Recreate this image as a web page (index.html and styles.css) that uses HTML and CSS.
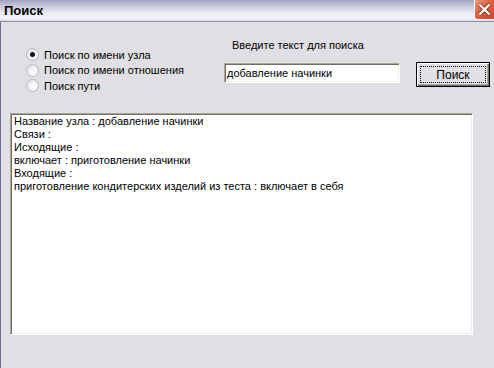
FILE: index.html
```html
<!DOCTYPE html>
<html lang="ru">
<head>
    <meta charset="UTF-8">
    <title>Поиск</title>
    <link rel="stylesheet" href="styles.css">
</head>
<body>

<div class="window">
    <div class="titlebar">
        <span class="title">Поиск</span>
        <div class="close" title="Закрыть">
            <svg class="close-x" width="13" height="13" viewBox="0 0 13 13">
                <path d="M1.5 1.5 L11.5 11.5 M11.5 1.5 L1.5 11.5" stroke="#9a3520" stroke-width="4" fill="none"/>
                <path d="M1.5 1.5 L11.5 11.5 M11.5 1.5 L1.5 11.5" stroke="#fff" stroke-width="2.2" fill="none"/>
            </svg>
        </div>
    </div>

    <div class="content">
        <div class="top">
            <!-- Search mode -->
            <div class="radios">
                <label class="radio"><span class="dot checked"></span>Поиск по имени узла</label>
                <label class="radio"><span class="dot"></span>Поиск по имени отношения</label>
                <label class="radio"><span class="dot"></span>Поиск пути</label>
            </div>

            <!-- Search text -->
            <div class="search">
                <div class="search-label">Введите текст для поиска</div>
                <div class="search-row">
                    <div class="field">добавление начинки</div>
                    <button class="btn"><span class="focus">Поиск</span></button>
                </div>
            </div>
        </div>

        <!-- Result -->
        <div class="output">
            <div>Название узла : добавление начинки</div>
            <div>Связи :</div>
            <div>Исходящие :</div>
            <div>включает : приготовление начинки</div>
            <div>Входящие :</div>
            <div>приготовление кондитерских изделий из теста : включает в себя</div>
        </div>
    </div>
</div>

</body>
</html>
```

FILE: styles.css
```css
html, body {
    overflow: hidden;
}
body {
    margin: 0;
    padding: 0;
    font-family: "Liberation Sans", Arial, sans-serif;
    font-size: 11px;
    color: #000;
    background-color: #e0dfe3;
}
.window {
    width: 494px;
    height: 368px;
    display: flex;
    flex-direction: column;
    overflow: hidden;
}
.titlebar {
    height: 21px;
    flex-shrink: 0;
    display: flex;
    align-items: flex-start;
    background: linear-gradient(#a2a1c2 0%, #c4c3d8 25%, #eeeef4 65%, #f4f4f8 85%, #dcdce6 100%);
    border-bottom: 1px solid #8c8ba8;
}
.title {
    flex: 1;
    font-weight: bold;
    font-size: 13px;
    line-height: 21px;
    padding-left: 4px;
}
.close {
    box-sizing: border-box;
    width: 20px;
    min-width: 20px;
    height: 20px;
    border-left: 1px solid #fff;
    border-bottom: 1px solid #fff;
    border-radius: 0 0 0 3px;
    background-color: #d65a3e;
    background-image: linear-gradient(135deg, #ec9a82 0%, #dc6446 40%, #c8472c 100%);
    display: flex;
    align-items: center;
    justify-content: center;
}
.close-x {
    display: block;
}
.content {
    flex: 1;
    border-left: 1px solid #6e6d92;
    display: flex;
    flex-direction: column;
}
.top {
    height: 91px;
    display: flex;
}
.radios {
    margin-left: 25px;
    padding-top: 25px;
    width: 198px;
}
.radio {
    display: flex;
    align-items: center;
    height: 15.6px;
}
.dot {
    width: 11px;
    height: 11px;
    border: 1px solid #b9b8c4;
    border-radius: 50%;
    background: radial-gradient(circle at 65% 65%, #ffffff 0%, #f2f2f2 45%, #d8d7de 100%);
    margin-right: 5px;
    position: relative;
}
.dot.checked::after {
    content: "";
    position: absolute;
    left: 3px;
    top: 3px;
    width: 5px;
    height: 5px;
    border-radius: 50%;
    background-color: #111;
}
.search {
    padding-top: 17px;
}
.search-label {
    margin-left: 8px;
    line-height: 13px;
    margin-bottom: 11px;
}
.search-row {
    display: flex;
    align-items: flex-start;
}
.field {
    width: 172px;
    height: 16px;
    line-height: 16px;
    background-color: #fff;
    border: 1px solid;
    border-color: #aca899 #fff #fff #aca899;
    box-shadow: inset 1px 1px 0 #716f64, inset -1px -1px 0 #f1efe2;
    padding: 1px 0 1px 2px;
}
.btn {
    width: 74px;
    height: 25px;
    margin: -1px 0 0 16px;
    padding: 2px;
    border: 1px solid #000;
    background-color: #e0dfe3;
    box-shadow: inset 1px 1px 0 #fff, inset -1px -1px 0 #716f64, inset -2px -2px 0 #aca899;
    font-family: "Liberation Sans", Arial, sans-serif;
    font-size: 12px;
    display: flex;
}
.focus {
    flex: 1;
    border: 1px dotted #000;
    display: flex;
    align-items: center;
    justify-content: center;
    margin: 1px;
}
.output {
    margin-left: 9px;
    width: 460px;
    height: 219px;
    padding: 1px 0 0 1px;
    background-color: #fff;
    border: 1px solid;
    border-color: #aca899 #fff #fff #aca899;
    box-shadow: inset 1px 1px 0 #716f64, inset -1px -1px 0 #f1efe2;
    line-height: 13px;
}
.output div {
    padding-left: 2px;
}
```
